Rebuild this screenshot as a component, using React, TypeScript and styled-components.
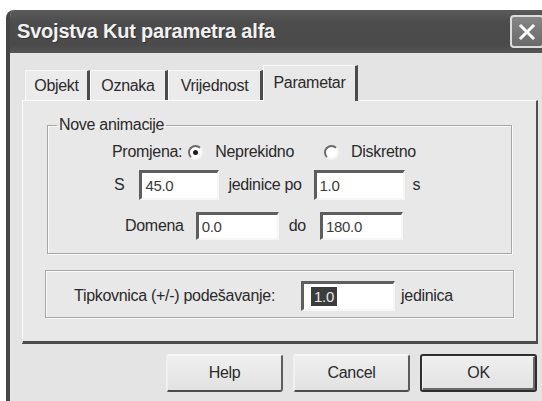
import React from "react";
import styled, { createGlobalStyle } from "styled-components";

const Global = createGlobalStyle`
  html, body {
    margin: 0;
    padding: 0;
    background: #ffffff;
    overflow: hidden;
  }
  body {
    font-family: "Liberation Sans", Arial, sans-serif;
    color: #2a2a2a;
  }
`;

const Window = styled.div`
  margin: 10px 0 0 6px;
  width: 540px;
  height: 391px;
  display: flex;
  flex-direction: column;
  background: #e4e4e4;
  border-left: 4px solid #464646;
  border-top-left-radius: 8px;
  overflow: hidden;
`;

const TitleBar = styled.div`
  height: 43px;
  flex: none;
  display: flex;
  align-items: center;
  justify-content: space-between;
  padding: 0 6px 0 7px;
  background: linear-gradient(#5a5a5a, #4c4c4c 30%, #4a4a4a 80%, #555555);
`;

const Title = styled.div`
  font-size: 20px;
  font-weight: 700;
  color: #f2f2f2;
  letter-spacing: -0.2px;
  text-shadow: 1px 1px 0 #333;
`;

const CloseButton = styled.div`
  width: 30px;
  height: 29px;
  border: 2px solid #dcdcdc;
  border-radius: 4px;
  background: linear-gradient(#858585, #6a6a6a);
  display: flex;
  align-items: center;
  justify-content: center;
`;

const Body = styled.div`
  flex: 1;
  display: flex;
  flex-direction: column;
  padding: 12px 12px 0 12px;
`;

const TabStrip = styled.div`
  display: flex;
  align-items: flex-end;
  height: 35px;
  padding-left: 3px;
`;

const Tab = styled.div<{ $active?: boolean; $w: number }>`
  box-sizing: border-box;
  width: ${(p) => p.$w}px;
  height: ${(p) => (p.$active ? 36 : 30)}px;
  margin-bottom: ${(p) => (p.$active ? -1 : 0)}px;
  display: flex;
  align-items: ${(p) => (p.$active ? "flex-start" : "center")};
  justify-content: center;
  padding-top: ${(p) => (p.$active ? 8 : 1)}px;
  font-size: 16px;
  letter-spacing: -0.3px;
  background: ${(p) => (p.$active ? "#e8e8e8" : "#ebebeb")};
  border-top: 1px solid #f8f8f8;
  border-left: 1px solid #f8f8f8;
  border-right: 3px solid #4c4c4c;
  position: relative;
  z-index: ${(p) => (p.$active ? 1 : 0)};
`;

const TabPanel = styled.div`
  height: 244px;
  box-sizing: border-box;
  display: flex;
  flex-direction: column;
  background: #e8e8e8;
  border-top: 1px solid #fbfbfb;
  border-left: 1px solid #fbfbfb;
  border-right: 2px solid #505050;
  border-bottom: 3px solid #4a4a4a;
  padding: 15px 0 0 0;
`;

const Group = styled.fieldset<{ $inset: number; $pt: number; $pb: number; $mt?: number }>`
  margin: ${(p) => p.$mt ?? 0}px ${(p) => p.$inset}px 0;
  padding: ${(p) => p.$pt}px 0 ${(p) => p.$pb}px 0;
  border: 1px solid #a6a6a6;
  box-shadow: inset 1px 1px 0 #fafafa, 1px 1px 0 #fafafa;
  display: flex;
  flex-direction: column;
  min-width: 0;
`;

const Legend = styled.legend`
  margin-left: 9px;
  padding: 0 2px;
  font-size: 16px;
  line-height: 18px;
  letter-spacing: -0.3px;
`;

const Row = styled.div<{ $indent: number; $h: number; $mt?: number }>`
  display: flex;
  align-items: center;
  height: ${(p) => p.$h}px;
  margin-top: ${(p) => p.$mt ?? 0}px;
  padding-left: ${(p) => p.$indent}px;
`;

const Label = styled.span<{ $ml?: number }>`
  margin-left: ${(p) => p.$ml ?? 0}px;
  font-size: 16px;
  letter-spacing: -0.3px;
  white-space: nowrap;
`;

const Radio = styled.span<{ $checked?: boolean; $ml: number }>`
  box-sizing: border-box;
  width: 15px;
  height: 15px;
  margin-left: ${(p) => p.$ml}px;
  border-radius: 50%;
  border: 2px solid;
  border-color: #6a6a6a #f4f4f4 #f4f4f4 #6a6a6a;
  background: #ffffff;
  display: flex;
  align-items: center;
  justify-content: center;
  &::after {
    content: "";
    width: 5px;
    height: 5px;
    border-radius: 50%;
    background: ${(p) => (p.$checked ? "#1e1e1e" : "transparent")};
  }
`;

const Field = styled.div<{ $w: number; $h: number; $ml: number }>`
  box-sizing: border-box;
  width: ${(p) => p.$w}px;
  height: ${(p) => p.$h}px;
  margin-left: ${(p) => p.$ml}px;
  background: #ffffff;
  border-top: 3px solid #5e5e5e;
  border-left: 3px solid #5e5e5e;
  border-right: 2px solid #f6f6f6;
  border-bottom: 2px solid #f6f6f6;
  display: flex;
  align-items: center;
  padding-left: 3px;
  font-size: 15px;
  letter-spacing: -0.3px;
  color: #3a3a3a;
`;

const Selected = styled.span`
  background: #3c3c3c;
  color: #e8e8e8;
  padding: 1px 3px;
  margin-left: 4px;
`;

const ButtonRow = styled.div`
  display: flex;
  justify-content: flex-end;
  gap: 10px;
  margin-top: 10px;
  padding-right: 1px;
`;

const Button = styled.div<{ $primary?: boolean }>`
  box-sizing: border-box;
  width: 117px;
  height: 38px;
  display: flex;
  align-items: center;
  justify-content: center;
  font-size: 16px;
  letter-spacing: -0.3px;
  background: linear-gradient(#efefef, #e2e2e2);
  border-radius: 3px;
  border: 2px solid;
  border-color: ${(p) =>
    p.$primary ? "#2e2e2e" : "#f6f6f6 #5c5c5c #4c4c4c #f0f0f0"};
  box-shadow: ${(p) =>
    p.$primary ? "inset 1px 1px 0 #f4f4f4, inset -2px -2px 0 #6a6a6a" : "none"};
`;

export default function App() {
  return (
    <>
      <Global />
      <Window>
        <TitleBar>
          <Title>Svojstva Kut parametra alfa</Title>
          <CloseButton>
            <svg width="18" height="18" viewBox="0 0 18 18">
              <path
                d="M3 3 L15 15 M15 3 L3 15"
                stroke="#ffffff"
                strokeWidth="3"
                strokeLinecap="square"
              />
            </svg>
          </CloseButton>
        </TitleBar>
        <Body>
          <TabStrip>
            <Tab $w={65}>Objekt</Tab>
            <Tab $w={78}>Oznaka</Tab>
            <Tab $w={95}>Vrijednost</Tab>
            <Tab $w={95} $active>
              Parametar
            </Tab>
          </TabStrip>
          <TabPanel>
            <Group $inset={24} $pt={8} $pb={13}>
              <Legend>Nove animacije</Legend>
              <Row $indent={64} $h={20}>
                <Label>Promjena:</Label>
                <Radio $ml={6} $checked />
                <Label $ml={12}>Neprekidno</Label>
                <Radio $ml={30} />
                <Label $ml={12}>Diskretno</Label>
              </Row>
              <Row $indent={66} $h={30} $mt={8}>
                <Label>S</Label>
                <Field $w={80} $h={30} $ml={15}>
                  45.0
                </Field>
                <Label $ml={9}>jedinice po</Label>
                <Field $w={91} $h={30} $ml={12}>
                  1.0
                </Field>
                <Label $ml={8}>s</Label>
              </Row>
              <Row $indent={77} $h={28} $mt={12}>
                <Label>Domena</Label>
                <Field $w={83} $h={28} $ml={12}>
                  0.0
                </Field>
                <Label $ml={10}>do</Label>
                <Field $w={83} $h={28} $ml={14}>
                  180.0
                </Field>
              </Row>
            </Group>
            <Group $inset={22} $pt={10} $pb={6} $mt={16}>
              <Row $indent={28} $h={30}>
                <Label>Tipkovnica (+/-) podešavanje:</Label>
                <Field $w={94} $h={30} $ml={26}>
                  <Selected>1.0</Selected>
                </Field>
                <Label $ml={6}>jedinica</Label>
              </Row>
            </Group>
          </TabPanel>
          <ButtonRow>
            <Button>Help</Button>
            <Button>Cancel</Button>
            <Button $primary>OK</Button>
          </ButtonRow>
        </Body>
      </Window>
    </>
  );
}
